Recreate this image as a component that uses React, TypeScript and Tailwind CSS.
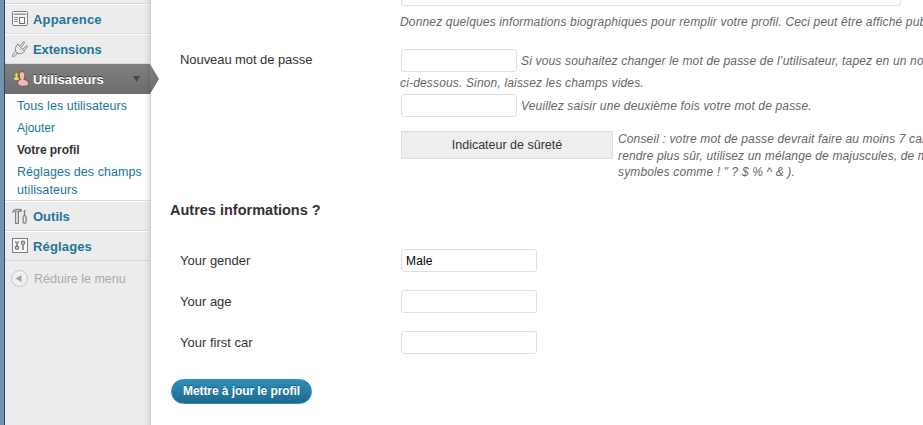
import React from "react";

function AppearanceIcon() {
  return (
    <svg width="16" height="16" viewBox="0 0 16 16" fill="none" stroke="#7d7d7d">
      <rect x="0.5" y="0.5" width="15" height="14" rx="1" fill="#f6f6f6" />
      <path d="M1.5 2.5h13" stroke="#c4c4c4" />
      <path d="M1.5 3.5h13" stroke="#9b9b9b" />
      <path d="M2 6.5h4M2 8.5h4M2 10.5h4" stroke="#8a8a8a" />
      <rect x="7.5" y="6.5" width="5" height="6" fill="#fff" stroke="#6f6f6f" />
    </svg>
  );
}

function PlugIcon() {
  return (
    <svg width="16" height="17" viewBox="0 0 16 17" fill="none" stroke="#7d7d7d" strokeLinecap="round" strokeLinejoin="round">
      <path d="M8 4.8 11.3.9c.8-.5 1.5.2 1.1.9L9.7 5.9M10.9 8.3l3.4-3.5c.8-.4 1.4.4 1 1L11.6 10" fill="#fff" />
      <path d="M5.8 3.2 12.4 10.4C10.5 12.8 7 13.4 4.8 11.6 2.6 9.7 3 5.8 5.8 3.2Z" fill="#f3f3f3" />
      <path d="M5.7 6 9.6 10.3" stroke="#b4b4b4" />
      <path d="M3.8 9.9C3 11.9.4 11.6.6 15.5M5.8 12.1C4.6 14.4 2.2 13 2 15.8" />
    </svg>
  );
}

function UsersIcon() {
  return (
    <svg width="18" height="17" viewBox="0 0 18 17" strokeWidth="1">
      <path d="M1.4 8.2c0-1.4.9-1.9 1.9-2.1C2.6 5.2 2.6 3.2 3 2.3c.6-1.1 2.3-1.1 2.8 0 .5 1 .4 2.9-.2 3.8 1.2.3 1.9.9 1.9 2.2 0 1.6-6.1 1.6-6.1-.1Z" fill="#e9dd62" stroke="#766c40" />
      <path d="M5.7 12.8c-.2-2.7 1.2-3.9 3-4.2C7.6 7.4 7.1 5.6 7.2 3.8 7.4 1.6 8.6.6 10.1.6s2.7 1 2.8 3.2c.1 1.6-.2 3.2-1.1 4.6 2.9.4 5 1.8 4.9 4.4 0 3.4-10.7 3.4-11 0Z" fill="#efb8b2" stroke="#7b4f4c" />
    </svg>
  );
}

function ToolsIcon() {
  return (
    <svg width="16" height="17" viewBox="0 0 16 17" fill="none" stroke="#7d7d7d">
      <path d="M.6 4.4C1 2 2.6 1.3 5 1.3h3.5v2.2H6.5v12h-3v-12C2.2 3.3 1.5 3.7.6 4.4Z" fill="#b9b9b9" />
      <path d="M5 4.5v10" stroke="#f2f2f2" />
      <path d="M9.5 1.5v2" />
      <path d="M12.5 2v6" strokeWidth="1.5" />
      <rect x="11" y="7.5" width="3.2" height="8" rx="1.5" fill="#c4c4c4" />
      <path d="M12.5 9.5v4" stroke="#f0f0f0" />
    </svg>
  );
}

function SettingsIcon() {
  return (
    <svg width="16" height="16" viewBox="0 0 16 16" fill="none" stroke="#7d7d7d">
      <rect x="0.5" y="0.5" width="15" height="14" fill="#f9f9f9" />
      <path d="M3.5 3v2M6.5 3v2" stroke="#999" />
      <path d="M5 3.5v4.5M11 7v5" strokeWidth="1.5" stroke="#777" />
      <circle cx="5" cy="9.8" r="1.6" strokeWidth="1.4" stroke="#777" />
      <circle cx="11" cy="4.8" r="1.6" strokeWidth="1.4" stroke="#777" />
    </svg>
  );
}

function MenuRow({ icon, label, tracking }: { icon: React.ReactNode; label: string; tracking: string }) {
  return (
    <div className="flex h-[30px] shrink-0 items-center border-t border-b border-t-white border-b-[#dadada] pl-[7px]">
      <span className="flex w-[21px]">{icon}</span>
      <span className={"pt-[2px] text-[13px] leading-[18px] font-bold text-[#21759b] " + tracking}>{label}</span>
    </div>
  );
}

function Sidebar() {
  return (
    <aside className="relative flex h-[425px] w-[146px] shrink-0 flex-col border-r border-[#ccc] bg-[#ececec]">
      <div className="h-1 shrink-0 border-b border-[#dadada]" />
      <MenuRow icon={<AppearanceIcon />} label="Apparence" tracking="tracking-[0.17px]" />
      <MenuRow icon={<PlugIcon />} label="Extensions" tracking="tracking-[-0.07px]" />
      <div className="relative flex h-[30px] shrink-0 items-center bg-linear-to-b from-[#808080] to-[#6d6d6d] pl-[7px]">
        <span className="flex w-[21px]"><UsersIcon /></span>
        <span className="pt-[2px] text-[13px] leading-[18px] font-bold text-white [text-shadow:0_-1px_0_#333]">Utilisateurs</span>
        <svg className="absolute top-[12px] left-[128px]" width="8" height="7" viewBox="0 0 8 7"><path d="M0 0h7L3.5 6Z" fill="#484848" /></svg>
        <svg className="absolute top-0 left-[145px] z-10" width="9" height="30" viewBox="0 0 9 30">
          <defs>
            <linearGradient id="arrow" x1="0" y1="0" x2="0" y2="1"><stop stopColor="#808080" /><stop offset="1" stopColor="#6d6d6d" /></linearGradient>
          </defs>
          <path d="M0 0 9 15 0 30Z" fill="url(#arrow)" />
        </svg>
      </div>
      <nav className="flex h-[107px] shrink-0 flex-col border-b border-[#dadada] bg-white pt-[3px] pl-3 text-[12px] leading-[18px] text-[#21759b]">
        <a className="h-[22px] text-[12.5px] tracking-[0.04px]">Tous les utilisateurs</a>
        <a className="h-[22px]">Ajouter</a>
        <a className="h-[22px] font-bold tracking-[-0.05px] text-[#333]">Votre profil</a>
        <a className="text-[12.5px] tracking-[0.06px] whitespace-nowrap">Réglages des champs<br />utilisateurs</a>
      </nav>
      <MenuRow icon={<ToolsIcon />} label="Outils" tracking="tracking-normal" />
      <MenuRow icon={<SettingsIcon />} label="Réglages" tracking="tracking-[0.15px]" />
      <div className="flex h-[35px] items-center pl-[6px]">
        <svg width="17" height="17" viewBox="0 0 17 17">
          <circle cx="8.5" cy="8.5" r="8" fill="#f0f0f0" stroke="#c4c4c4" />
          <path d="M4.5 8.5 10.5 5v7Z" fill="#a4a4a4" />
        </svg>
        <span className="pt-[2px] pl-[6px] text-[12.5px] text-[#aaa]">Réduire le menu</span>
      </div>
      <div className="pointer-events-none absolute inset-y-0 right-0 w-[6px] bg-linear-to-r from-transparent to-black/8" />
    </aside>
  );
}

function Field({ label, value }: { label: string; value: string }) {
  return (
    <div className="flex h-[41px] items-start pl-[10px]">
      <label className="w-[221px] pt-[3px] text-[13px] leading-[18px]">{label}</label>
      <input className="h-[23px] w-[136px] rounded-[3px] border border-[#dfdfdf] bg-white px-[4px] text-[12px] tracking-[0.15px] text-black" defaultValue={value} />
    </div>
  );
}

export default function App() {
  return (
    <div className="flex h-[425px] w-[923px] overflow-hidden bg-white font-['Liberation_Sans',Arial,sans-serif] text-[#333]">
      <div className="w-[5px] shrink-0 border-r border-[#34465c] bg-[#7491b0]" />
      <Sidebar />
      <main className="flex min-w-0 flex-1 flex-col overflow-hidden pl-[19px] whitespace-nowrap">
        <section className="flex h-[201px] shrink-0 pl-[10px]">
          <div className="w-[220px] shrink-0 pt-[51px] text-[13px] leading-[18px] tracking-[-0.07px]">Nouveau mot de passe</div>
          <div className="flex flex-col text-[12px] leading-[18px] tracking-[0.16px] text-[#666] italic">
            <div className="ml-px h-[6px] w-[500px] rounded-b-[3px] border border-t-0 border-[#dfdfdf]" />
            <p className="mt-[7px]">Donnez quelques informations biographiques pour remplir votre profil. Ceci peut être affiché publiquement.</p>
            <div className="mt-[18px] flex h-[23px] items-center pl-px">
              <input type="password" className="h-[23px] w-[116px] rounded-[3px] border border-[#dfdfdf] bg-white" />
              <span className="pl-1">Si vous souhaitez changer le mot de passe de l’utilisateur, tapez en un nouveau</span>
            </div>
            <p className="mt-[2px] h-5">ci-dessous. Sinon, laissez les champs vides.</p>
            <div className="flex h-[23px] items-center pl-px">
              <input type="password" className="h-[23px] w-[116px] rounded-[3px] border border-[#dfdfdf] bg-white" />
              <span className="pl-1">Veuillez saisir une deuxième fois votre mot de passe.</span>
            </div>
            <div className="mt-[14px] flex items-start pl-px">
              <div className="h-[28px] w-[212px] shrink-0 border border-[#ddd] bg-[#eee] text-center text-[12.5px] leading-[26px] tracking-[0px] text-[#333] not-italic">Indicateur de sûreté</div>
              <p className="pl-[5px] leading-[16.5px] tracking-[0.14px]">
                Conseil : votre mot de passe devrait faire au moins 7 caractères de long. Pour le<br />
                rendre plus sûr, utilisez un mélange de majuscules, de minuscules, de chiffres et de<br />
                symboles comme ! " ? $ % ^ &amp; ).
              </p>
            </div>
          </div>
        </section>
        <h3 className="h-[48px] shrink-0 text-[14.5px] leading-[18px] font-bold">Autres informations ?</h3>
        <Field label="Your gender" value="Male" />
        <Field label="Your age" value="" />
        <Field label="Your first car" value="" />
        <button className="mt-[7px] ml-px h-[25px] w-[141px] rounded-full border border-[#298cba] bg-linear-to-b from-[#2a8fbd] to-[#21698b] text-[12px] leading-[23px] font-bold tracking-[-0.07px] text-white [text-shadow:0_-1px_0_rgba(0,0,0,0.3)]">Mettre à jour le profil</button>
      </main>
    </div>
  );
}
